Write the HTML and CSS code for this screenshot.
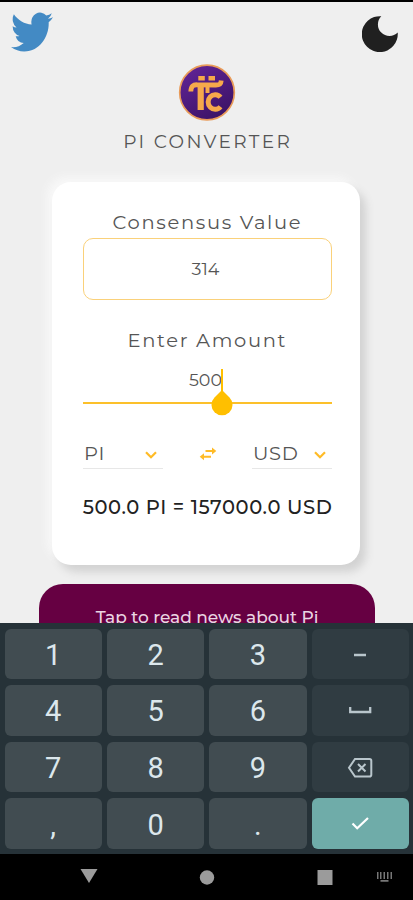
FILE: index.html
```html
<!DOCTYPE html>
<html lang="en">
<head>
<meta charset="utf-8">
<title>Pi Converter</title>
<link rel="stylesheet" href="styles.css">
</head>
<body>
<div class="screen">
  <main class="app">
    <header class="topbar">
      <svg class="bird" viewBox="0 2 24 20" preserveAspectRatio="none"><path d="M23.950 4.570a10 10 0 0 1-2.820.78 4.960 4.960 0 0 0 2.160-2.730c-.95.56-2 .96-3.130 1.190a4.920 4.920 0 0 0-8.380 4.480C7.690 8.100 4.070 6.130 1.640 3.160a4.920 4.920 0 0 0 1.520 6.570 4.900 4.900 0 0 1-2.230-.61v.06a4.920 4.920 0 0 0 3.950 4.830 5 5 0 0 1-2.210.08 4.940 4.940 0 0 0 4.600 3.420A9.870 9.870 0 0 1 0 19.540a14 14 0 0 0 7.550 2.210c9.050 0 14-7.500 14-13.980 0-.21 0-.42-.02-.63a9.940 9.940 0 0 0 2.460-2.550z"/></svg>
      <svg class="moon" viewBox="0 0 36 36"><path d="M19.300 .2A11.500 11.500 0 0 0 35.700 16.600 18 18 0 1 1 19.300 .2z"/></svg>
    </header>
    <section class="brand">
      <svg class="logo" viewBox="0 0 58 58">
        <defs><linearGradient id="violet" x1="0" y1="0" x2="0.6" y2="1"><stop offset="0" stop-color="#64259a"/><stop offset="1" stop-color="#3d1468"/></linearGradient></defs>
        <circle cx="29" cy="28.500" r="27.300" fill="url(#violet)" stroke="#e99b59" stroke-width="1.700"/>
        <g fill="#f6a94b"><rect x="20.300" y="12" width="6.500" height="4.500"/><rect x="30.500" y="12" width="6.500" height="4.500"/></g>
        <g fill="none" stroke="#f6a94b">
          <path d="M12.800 27.500c.2-5.500 2.500-7 6.500-6.700l18 .2c4.500.2 5.700-1 5.900-4.500" stroke-width="4.800"/>
          <path d="M22.700 21v25" stroke-width="6.200"/>
          <path d="M29.500 22v7" stroke-width="4"/>
          <path d="M42.500 33.300a7 7.300 0 1 0 0 9.400" stroke-width="5"/>
        </g>
      </svg>
      <h1 class="title">PI CONVERTER</h1>
    </section>
    <section class="card">
      <h2 class="label consensus">Consensus Value</h2>
      <div class="value-box"><span class="number consensus-number">314</span></div>
      <h2 class="label enter">Enter Amount</h2>
      <div class="amount">
        <span class="number typed">500</span>
        <svg class="cursor" viewBox="0 0 22 48"><path d="M10 1h2v23h-2z"/><path d="M11 22l7.500 7.500a10.500 10.500 0 1 1-15 0z"/></svg>
      </div>
      <div class="units">
        <div class="select"><span class="unit">PI</span><svg class="chevron" viewBox="0 0 12 8"><path d="M1 1.200l5 5 5-5"/></svg></div>
        <svg class="swap" viewBox="0 0 18 14"><path d="M6.500 4H15M12 9.700H3"/><path class="tip" d="M13 .5L17.300 4 13 7.500zM5 6.200L.7 9.700 5 13.200z"/></svg>
        <div class="select"><span class="unit usd">USD</span><svg class="chevron" viewBox="0 0 12 8"><path d="M1 1.200l5 5 5-5"/></svg></div>
      </div>
      <p class="result">500.0 PI = 157000.0 USD</p>
    </section>
    <div class="news"><span class="news-text">Tap to read news about Pi</span></div>
  </main>
  <section class="keyboard">
    <div class="key">1</div><div class="key">2</div><div class="key">3</div>
    <div class="key side"><svg viewBox="0 0 26 24"><path d="M7 12h12" stroke-width="2.500"/></svg></div>
    <div class="key">4</div><div class="key">5</div><div class="key">6</div>
    <div class="key side"><svg viewBox="0 0 26 24"><path d="M3.200 8v5h20V8" stroke-width="2.300"/></svg></div>
    <div class="key">7</div><div class="key">8</div><div class="key">9</div>
    <div class="key side"><svg viewBox="0 0 26 24"><path d="M8 3h14.500q1.800 0 1.800 1.800v14q0 1.800-1.800 1.800H8L2 11.800z" stroke-width="2"/><path d="M11 8l7.500 7.500M18.500 8L11 15.500" stroke-width="2"/></svg></div>
    <div class="key">,</div><div class="key">0</div><div class="key">.</div>
    <div class="key go"><svg viewBox="0 0 26 24"><path d="M5.500 10.500l4.700 4.700L21 5" stroke-width="2.200"/></svg></div>
  </section>
  <nav class="navbar">
    <svg viewBox="0 0 413 46"><path d="M80.500 15h17L89 29z"/><circle cx="207" cy="23.500" r="7.200"/><path d="M317.500 16h15v15h-15z"/><path class="dim" d="M377 18h1.500v7H377zM380 18h1.500v7H380zM383.500 18h1.500v7h-1.500zM387 18h1.500v7H387zM390.500 18h1.500v7h-1.500zM380.500 26h8v1.800h-8z"/></svg>
  </nav>
</div>
</body>
</html>
```
FILE: styles.css
```css
* { box-sizing: border-box; }
body { margin: 0; background: #000; }
h1, h2, p { margin: 0; font-weight: 400; }
svg { display: block; }
.screen {
  width: 413px;
  height: 900px;
  display: flex;
  flex-direction: column;
  overflow: hidden;
  font-family: Montserrat, Lato, sans-serif;
  color: #555;
}
.app {
  height: 623px;
  border-top: 2px solid #000;
  background: #efefef;
  display: flex;
  flex-direction: column;
  align-items: center;
  overflow: hidden;
  padding-right: 1px;
}
.topbar {
  width: 100%;
  height: 62px;
  flex: none;
  display: flex;
  justify-content: space-between;
  align-items: flex-start;
  padding: 10px 14px 0 11px;
}
.bird { width: 42px; height: 40px; fill: #438ac4; }
.moon { width: 36px; height: 36px; margin-top: 4px; fill: #202020; }
.brand {
  height: 118px;
  flex: none;
  display: flex;
  flex-direction: column;
  align-items: center;
  padding-left: 1px;
}
.logo { width: 58px; height: 58px; }
.title { font-size: 18.5px; line-height: 24px; margin-top: 8px; letter-spacing: 2.35px; margin-right: -2.35px; white-space: nowrap; }
.card {
  width: 308px;
  height: 383px;
  flex: none;
  background: #fff;
  border-radius: 19px;
  padding: 28px 28px 0 31px;
  display: flex;
  flex-direction: column;
  align-items: center;
  box-shadow: 6px 7px 9px #d2d2d2, -5px -5px 9px #f8f8f8;
}
.label { font-size: 19.5px; line-height: 24px; letter-spacing: 1.67px; margin-right: .33px; white-space: nowrap; }
.value-box {
  width: 249px;
  height: 62px;
  margin-top: 4px;
  border: 1.5px solid #fad17a;
  border-radius: 10px;
  display: flex;
  align-items: center;
  justify-content: center;
}
.number { font-size: 17.5px; line-height: 22px; }
.consensus-number { margin-right: 4px; }
.enter { margin-top: 28px; }
.amount {
  position: relative;
  width: 249px;
  height: 52px;
  border-bottom: 2px solid #fcc02a;
  display: flex;
  justify-content: center;
  padding-top: 17px;
}
.typed { margin-right: 4px; }
.cursor { position: absolute; left: 128px; top: 16px; width: 22px; height: 48px; fill: #ffbf00; }
.units {
  width: 249px;
  height: 65px;
  display: flex;
  justify-content: space-between;
  align-items: flex-end;
}
.select {
  width: 80px;
  height: 28px;
  border-bottom: 1px solid #e7e7e7;
  display: flex;
  justify-content: space-between;
  padding: 0 6px 0 1px;
}
.unit { font-size: 19.5px; line-height: 25px; letter-spacing: .6px; }
.chevron { width: 12px; height: 8px; margin-top: 10px; fill: none; stroke: #ffbb26; stroke-width: 2.2; }
.swap { width: 18px; height: 14px; margin-bottom: 8px; fill: none; stroke: #ffbb26; stroke-width: 2; }
.tip { fill: #ffbb26; stroke: none; }
.result { margin-top: 25px; font-size: 19.5px; line-height: 26px; font-weight: 500; letter-spacing: .62px; white-space: nowrap; color: #222; }
.news {
  width: 336px;
  height: 80px;
  flex: none;
  margin-top: 19px;
  margin-left: 2px;
  border-radius: 24px;
  background: #660042;
  color: #ead5e2;
  display: flex;
  justify-content: center;
  padding-top: 22px;
}
.news-text { font-size: 17px; line-height: 22px; font-weight: 500; letter-spacing: -.05px; white-space: nowrap; }
.keyboard {
  height: 231px;
  flex: none;
  background: #263238;
  padding: 5.5px 4px 5px 4.5px;
  display: grid;
  grid-template-columns: repeat(4, 1fr);
  grid-template-rows: repeat(4, 1fr);
  gap: 6px 5px;
  font-family: Roboto, sans-serif;
  font-size: 29px;
  color: #dce7ec;
}
.key {
  display: flex;
  align-items: center;
  justify-content: center;
  border-radius: 6px;
  background: #414c51;
  padding-top: 2px;
}
.key svg { width: 26px; height: 24px; fill: none; stroke: #b9c6cc; }
.side { background: #303c42; }
.go { background: #6faca9; }
.go svg { stroke: #fff; }
.navbar { height: 46px; flex: none; background: #000; }
.navbar svg { width: 413px; height: 46px; fill: #9b9b9b; }
.navbar .dim { fill: #777; }
```
